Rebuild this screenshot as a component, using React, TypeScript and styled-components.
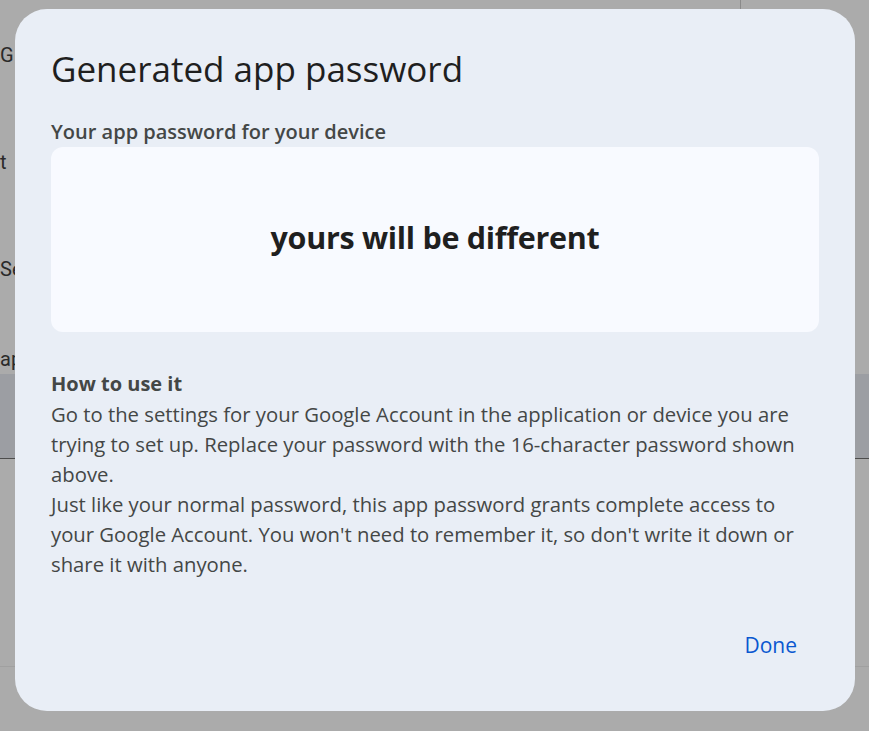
import React from 'react';
import styled, {createGlobalStyle} from 'styled-components';

const GlobalStyle = createGlobalStyle`
  html, body {
    margin: 0;
    padding: 0;
    height: 100%;
  }
  body {
    background: #ababab;
    font-family: "Open Sans", "Noto Sans", sans-serif;
    overflow: hidden;
  }
`

// what shows of the page behind the dialog, at its left edge
const pageLines = [
  {text: 'G', gap: 81},
  {text: 't', gap: 81},
  {text: 'Se', gap: 64},
  {text: 'ap', gap: 0},
];

const App = () => {
  return (
    <>
      <GlobalStyle/>
      <Page>
        <TopRule/>
        <PageColumn>
          {pageLines.map(line => (
            <PageLine key={line.text} $gap={line.gap}>{line.text}</PageLine>
          ))}
        </PageColumn>
        <PageBlock/>
        <PageFooter/>
      </Page>

      <Dialog role="dialog" aria-labelledby="dlg-title">
        <Title id="dlg-title">Generated app password</Title>
        <Label>Your app password for your device</Label>
        <PasswordBox>
          <PasswordText>yours will be different</PasswordText>
        </PasswordBox>

        <HowTo>
          <HowTitle>How to use it</HowTitle>
          <Body>
            Go to the settings for your Google Account in the application or device you are
            trying to set up. Replace your password with the 16-character password shown
            above.
          </Body>
          <Body>
            Just like your normal password, this app password grants complete access to
            your Google Account. You won't need to remember it, so don't write it down or
            share it with anyone.
          </Body>
        </HowTo>

        <Actions>
          <DoneButton type="button">Done</DoneButton>
        </Actions>
      </Dialog>
    </>
  );
};

export default App;

const Page = styled.div`
  position: relative;
  width: 869px;
  height: 731px;
  background: #ababab;
  overflow: hidden;
  display: flex;
  flex-direction: column;
`
const TopRule = styled.div`
  position: absolute;
  left: 740px;
  top: 0;
  width: 1px;
  height: 12px;
  background: #8a8a8a;
`
const PageColumn = styled.div`
  width: 15px;
  overflow: hidden;
  display: flex;
  flex-direction: column;
  padding-top: 42px;
`
const PageLine = styled.div<{ $gap: number }>`
  font-family: "Roboto", sans-serif;
  font-size: 20px;
  line-height: 26px;
  color: #2a2a2a;
  white-space: nowrap;
  margin-bottom: ${p => p.$gap}px;
`
const PageBlock = styled.div`
  margin-top: 2px;
  height: 84px;
  background: #9c9ea3;
  border-bottom: 1px solid #4d4d4d;
`
const PageFooter = styled.div`
  margin-top: 207px;
  height: 1px;
  background: #a0a0a0;
`

const Dialog = styled.div`
  position: absolute;
  left: 15px;
  top: 9px;
  width: 840px;
  height: 702px;
  box-sizing: border-box;
  padding: 39px 36px 0 36px;
  background: #e9eef6;
  border-radius: 32px;
  display: flex;
  flex-direction: column;
`
const Title = styled.h1`
  margin: 0;
  font-family: "Open Sans", sans-serif;
  font-weight: 400;
  font-size: 35px;
  line-height: 42px;
  color: #1f1f1f;
`
const Label = styled.div`
  margin-top: 29px;
  font-size: 20px;
  font-weight: 600;
  line-height: 26px;
  color: #444746;
`
const PasswordBox = styled.div`
  margin-top: 2px;
  height: 185px;
  border-radius: 12px;
  background: #f8faff;
  display: flex;
  align-items: center;
  justify-content: center;
`
const PasswordText = styled.div`
  font-size: 30.5px;
  font-weight: 700;
  color: #1f1f1f;
  margin-top: -6px;
  letter-spacing: -0.3px;
`
const HowTo = styled.div`
  margin-top: 37px;
  display: flex;
  flex-direction: column;
`
const HowTitle = styled.div`
  font-size: 20px;
  font-weight: 700;
  line-height: 30px;
  color: #444746;
`
const Body = styled.p`
  margin: 0;
  font-size: 20.3px;
  line-height: 30px;
  color: #444746;
`
const Actions = styled.div`
  margin-top: auto;
  display: flex;
  justify-content: flex-end;
  padding: 0 22px 52px 0;
`
const DoneButton = styled.button`
  border: none;
  background: transparent;
  padding: 0;
  font-family: "Open Sans", sans-serif;
  font-size: 21px;
  font-weight: 500;
  line-height: 28px;
  color: #0b57d0;
  cursor: pointer;
`
